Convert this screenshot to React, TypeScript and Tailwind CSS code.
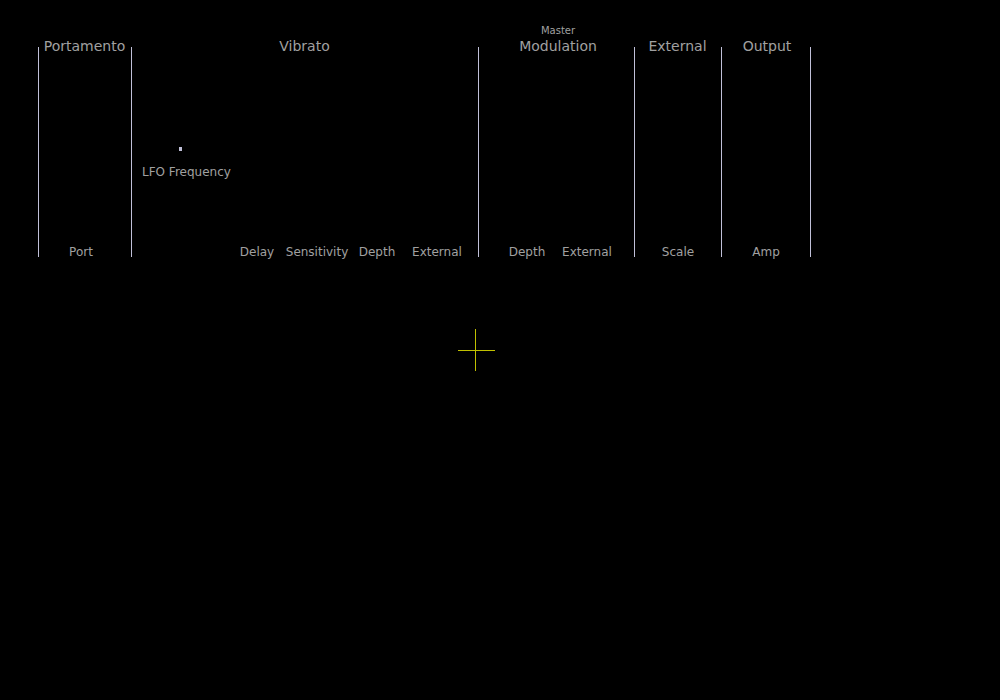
const font = { fontFamily: '"DejaVu Sans", Verdana, sans-serif' };

function Knob({ label }: { label: string }) {
  return (
    <div className="w-[60px] flex justify-center text-[12px] leading-[10px] text-[#a0a0a0] whitespace-nowrap">
      {label}
    </div>
  );
}

function Panel({
  title,
  width,
  over,
  last,
  shift,
  children,
}: {
  title: string;
  width: string;
  over?: string;
  last?: boolean;
  shift?: string;
  children: React.ReactNode;
}) {
  return (
    <div className={`flex flex-col ${width}`}>
      <div className={`h-[30px] flex flex-col justify-end items-center ${shift ?? ""}`}>
        {over && (
          <div className="text-[10px] leading-[12px] text-[#a0a0a0] mb-[1px]">{over}</div>
        )}
        <div className="text-[14px] leading-[16px] text-[#a0a0a0] whitespace-nowrap">{title}</div>
      </div>
      <div
        className={`-mt-[7px] h-[210px] border-l border-[#c0c0d8] ${last ? "border-r" : ""} flex flex-col`}
      >
        {children}
      </div>
    </div>
  );
}

export default function App() {
  return (
    <div className="relative w-[1000px] h-[700px] bg-black overflow-hidden" style={font}>
      <div className="flex pl-[38px] pt-[24px]">
        <Panel title="Portamento" width="w-[93px]">
          <div className="mt-auto flex justify-center pr-[8px]">
            <Knob label="Port" />
          </div>
        </Panel>

        <Panel title="Vibrato" width="w-[347px]">
          <div className="ml-[10px] mt-[100px] w-[90px] flex flex-col">
            <div className="ml-[37px] w-[3px] h-[4px] bg-[#c0c0d8]" />
            <div className="mt-[14px] text-[12px] leading-[14px] text-[#a0a0a0] whitespace-nowrap">
              LFO Frequency
            </div>
          </div>
          <div className="mt-auto flex justify-end pr-[11px]">
            <Knob label="Delay" />
            <Knob label="Sensitivity" />
            <Knob label="Depth" />
            <Knob label="External" />
          </div>
        </Panel>

        <Panel title="Modulation" over="Master" width="w-[156px]" shift="pl-[4px]">
          <div className="mt-auto flex justify-end pr-[17px]">
            <Knob label="Depth" />
            <Knob label="External" />
          </div>
        </Panel>

        <Panel title="External" width="w-[87px]">
          <div className="mt-auto flex justify-center">
            <Knob label="Scale" />
          </div>
        </Panel>

        <Panel title="Output" width="w-[90px]" last shift="pl-[2px]">
          <div className="mt-auto flex justify-center">
            <Knob label="Amp" />
          </div>
        </Panel>
      </div>

      {/* cursor crosshair */}
      <div className="absolute left-[458px] top-[350px] w-[37px] h-px bg-[#c0c000]" />
      <div className="absolute left-[475px] top-[329px] w-px h-[42px] bg-[#c0c000]" />
    </div>
  );
}
